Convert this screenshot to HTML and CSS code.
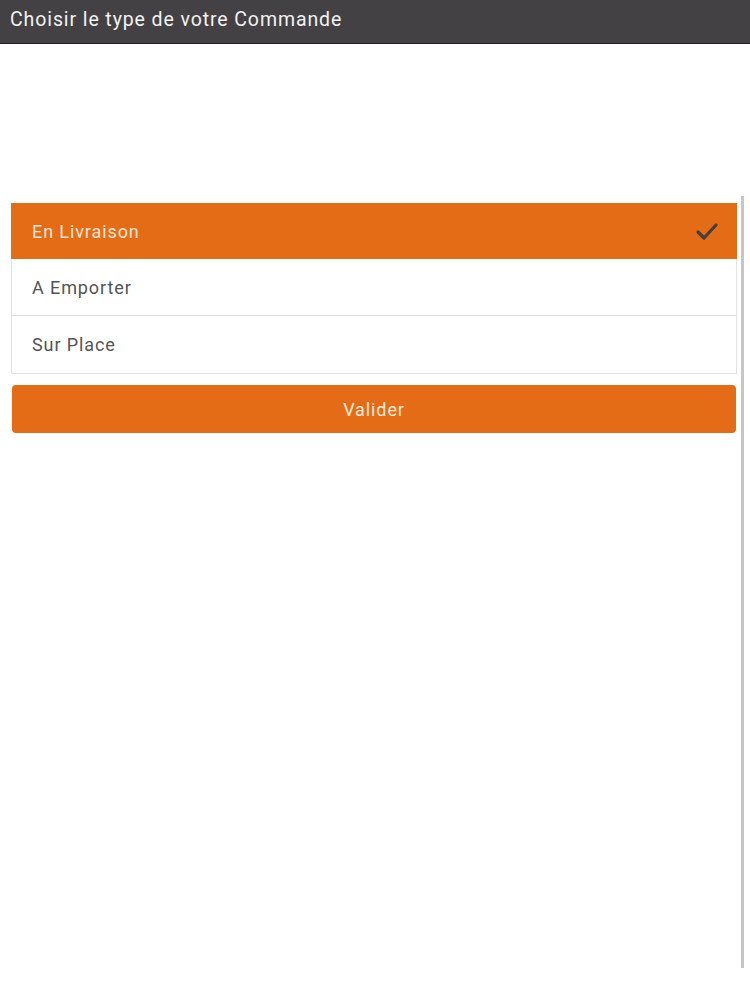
FILE: index.html
```html
<!DOCTYPE html>
<html lang="fr">
<head>
<meta charset="utf-8">
<title>Choisir le type de votre Commande</title>
<link rel="stylesheet" href="styles.css">
</head>
<body>
<header class="topbar">Choisir le type de votre Commande</header>
<main class="page">
  <div class="content">
    <ul class="options">
      <li class="option selected">
        <span>En Livraison</span>
        <svg class="check" width="24" height="20" viewBox="0 0 24 20"><path d="M3 11 L9 17 L21 4" fill="none" stroke="#433f3c" stroke-width="3.2" stroke-linecap="round" stroke-linejoin="round"/></svg>
      </li>
      <li class="option"><span>A Emporter</span></li>
      <li class="option"><span>Sur Place</span></li>
    </ul>
    <button class="validate">Valider</button>
  </div>
  <div class="scrollbar"></div>
</main>
</body>
</html>
```
FILE: styles.css
```css
* { box-sizing: border-box; }
html, body { margin: 0; padding: 0; background: #ffffff; }
body { font-family: Roboto, "Liberation Sans", sans-serif; width: 750px; height: 1000px; overflow: hidden; }
.topbar {
  height: 44px;
  background: #434143;
  border-bottom: 1px solid #1f1f1f;
  color: #f2f2f2;
  font-size: 19.5px;
  letter-spacing: 0.9px;
  line-height: 40px;
  padding-left: 10px;
}
.page {
  display: flex;
  padding-top: 152px;
  padding-left: 11px;
  gap: 4px;
}
.content { width: 726px; padding-top: 7px; }
.options {
  list-style: none;
  margin: 0;
  padding: 0;
  border: 1px solid #e2e2e4;
  border-top: none;
}
.option {
  height: 57px;
  display: flex;
  align-items: center;
  justify-content: space-between;
  padding: 0 17px 0 20px;
  border-bottom: 1px solid #dedee0;
  color: #545454;
  font-size: 18px;
  letter-spacing: 0.9px;
}
.option:last-child { border-bottom: none; height: 57px; }
.option.selected {
  background: #e56c17;
  color: #fbe4cf;
  border-bottom: none;
  height: 56px;
  margin: 0 -1px;
  padding-left: 21px;
  padding-right: 18px;
}
.check { display: block; }
.validate {
  display: block;
  width: 724px;
  height: 48px;
  margin: 11px 1px 0;
  border: none;
  border-radius: 4px;
  background: #e56c17;
  color: #fde9d6;
  font-family: Roboto, "Liberation Sans", sans-serif;
  font-size: 18px;
  letter-spacing: 0.9px;
}
.scrollbar {
  width: 3px;
  height: 772px;
  background: #c6c6c6;
}
```
